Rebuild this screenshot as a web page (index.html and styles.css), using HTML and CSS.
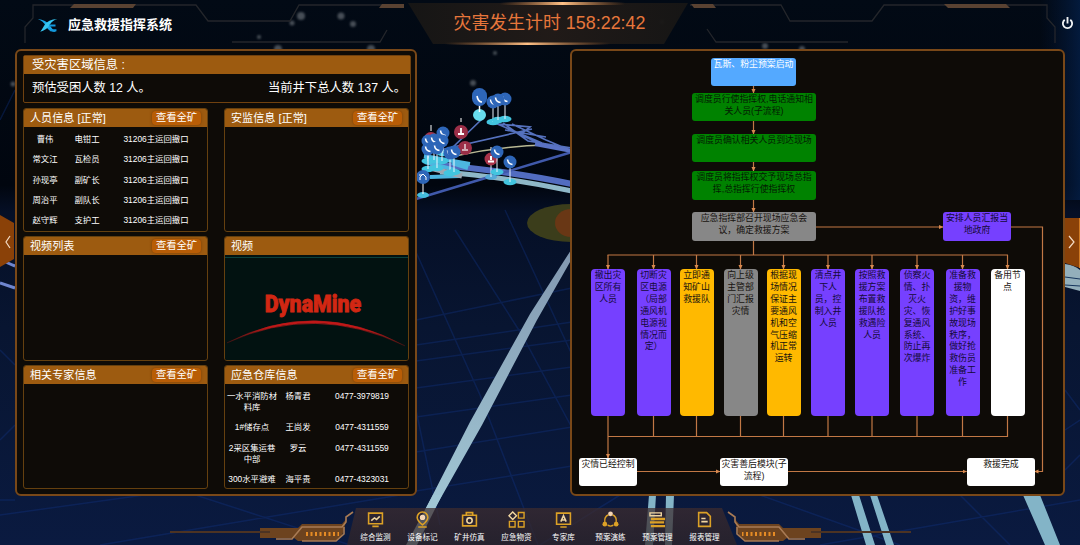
FILE: index.html
```html
<!DOCTYPE html>
<html lang="zh-CN">
<head>
<meta charset="utf-8">
<title>应急救援指挥系统</title>
<link rel="stylesheet" href="styles.css">
</head>
<body>
<svg class="scene" viewBox="0 0 1080 545" aria-hidden="true">
  <defs>
    <linearGradient id="sky" x1="0" y1="0" x2="0" y2="1"><stop offset="0" stop-color="#020a15"/><stop offset=".34" stop-color="#01060f"/><stop offset=".39" stop-color="#050f26"/><stop offset=".6" stop-color="#081531"/><stop offset="1" stop-color="#0a1a40"/></linearGradient>
    <linearGradient id="edge"><stop offset="0" stop-color="#04173a" stop-opacity="0"/><stop offset="1" stop-color="#04204a" stop-opacity=".75"/></linearGradient>
    <linearGradient id="plate"><stop offset="0" stop-color="#171615"/><stop offset=".5" stop-color="#221b18"/><stop offset="1" stop-color="#171615"/></linearGradient>
    <linearGradient id="glow"><stop offset="0" stop-color="#d9803a" stop-opacity="0"/><stop offset=".5" stop-color="#ffc187"/><stop offset="1" stop-color="#d9803a" stop-opacity="0"/></linearGradient>
    <linearGradient id="beam" x1="0" y1="0" x2="0" y2="1"><stop offset="0" stop-color="#8298b0"/><stop offset="1" stop-color="#a1c7d5"/></linearGradient>
    <filter id="soft"><feGaussianBlur stdDeviation="1.3"/></filter>
    <g id="phone"><ellipse cy="20" rx="6.500" ry="3.200" fill="#43c5df"/><path d="M0 6V20" stroke="#e8f4ff"/><circle r="6.500" fill="#2e66b8"/><path d="M-2.500-2.500Q-2 2 2.500 2.500" fill="none" stroke="#fff" stroke-width="1.600"/></g>
    <g id="alarm"><ellipse cy="18" rx="6" ry="2.800" fill="#55a9d8"/><path d="M0 6V18" stroke="#e8f4ff"/><circle r="6.500" fill="#a8344a"/><path d="M0-3V1M-3 2.500H3" stroke="#fff" stroke-width="2"/><path d="M0-12V-8" stroke="#fff"/></g>
  </defs>
  <rect width="1080" height="545" fill="url(#sky)"/>
  <rect x="1040" width="40" height="200" fill="url(#edge)"/>
  <g fill="#8b9298" opacity=".5" filter="url(#soft)"><circle cx="301" cy="16" r="4"/><circle cx="341" cy="16" r="3.500"/><circle cx="353" cy="24" r="3"/><circle cx="292" cy="23" r="2.500"/><circle cx="473" cy="83" r="3"/><circle cx="515" cy="14" r="3.500"/><circle cx="495" cy="53" r="2"/><circle cx="278" cy="49" r="4"/><circle cx="371" cy="49" r="4"/><circle cx="765" cy="46" r="3"/><circle cx="802" cy="49" r="3"/><circle cx="259" cy="37" r="2"/><circle cx="13" cy="84" r="2.500"/><circle cx="662" cy="22" r="2"/></g>
  <g fill="none" stroke="#143990" stroke-width="1.500" opacity=".32">
    <path d="M416 252L480 395 538 545M455 230L522 335 600 480M505 210L630 480M416 410L440 525M416 320L572 288M416 345L572 322M416 361L572 340M416 388L572 367M416 417L572 395M416 452L572 427M416 491L572 466M0 500H15M0 350L15 365M0 440L15 425M0 120L15 90M0 515L180 490 350 545M100 545L400 495M760 495L900 545M820 545L1080 500M1065 390L1080 410M1065 430L1080 420M1065 470L1080 455M540 545L620 495M960 495L1010 545"/>
  </g>
  <path d="M0 258Q8 264 15 266M0 283L15 288" stroke="#6f86cf" stroke-width="3" fill="none"/>
  <g fill="none">
    <path d="M440 172Q500 176 572 191" stroke="#8fb8c8" stroke-width="5"/>
    <path d="M430 164Q510 171 572 184" stroke="#526cc0" stroke-width="6"/>
    <path d="M416 199L572 152" stroke="#4059ab" stroke-width="2.500"/>
    <path d="M452 148L482 119M440 150L532 129 M495 123L542 143 572 151M503 123L528 141 572 148M487 123L530 127 520 135M512 124L546 140 572 151M500 125L545 146M505 130L546 137" stroke="#5571bd" stroke-width="1.700"/>
    <path d="M455 156Q500 146 546 145" stroke="#b9b994" stroke-width="1.500"/>
    <path d="M535 144L572 151" stroke="#5a73c5" stroke-width="4"/>
    <path d="M424 156L470 164M425 162L455 170M430 177L460 176M452 163L468 168" stroke="#4db6e0" stroke-width="4"/>
    <path d="M430 168L462 176" stroke="#9da8b3" stroke-width="5"/>
  </g>
  <ellipse cx="571" cy="223" rx="44" ry="19" fill="#3b3d1b"/><ellipse cx="571" cy="223" rx="16" ry="14" fill="#693715"/>
  <path d="M571 250L574 255 537 320 482 425 434 510H425L470 422 530 314Z" fill="url(#beam)"/>
  <path d="M433 495H442L417 545H406Z" fill="#a1c7d5"/>
  <path d="M649 495H656L653 545H645ZM666 495H674L672 545H665ZM851 495H859L875 545H866ZM870 495H877L894 545H886ZM1023 495H1040L1060 545H1045Z" fill="#83b4c7"/>
  <path d="M1065 264Q1074 265 1080 270V291L1065 287Z" fill="#93afbb"/><path d="M1065 277L1080 279M1065 285L1080 286" stroke="#15345b"/>
  <g>
    <use href="#phone" x="493" y="102"/><use href="#phone" x="505" y="99"/><use href="#phone" x="498" y="100"/>
    <ellipse cx="479.500" cy="115" rx="6.500" ry="6" fill="#67dcec"/><path d="M479.500 100V112" stroke="#fff" stroke-width="1.500"/><rect x="472" y="88" width="15" height="18" rx="7.500" fill="#2e66b8"/><path d="M477 96Q478 102 482 102" stroke="#fff" stroke-width="1.600" fill="none"/>
    <circle cx="431" cy="139" r="7" fill="#a8344a"/><path d="M431 125V131" stroke="#fff"/>
    <use href="#phone" x="443" y="133"/><use href="#phone" x="428" y="141"/><use href="#phone" x="434" y="140"/><use href="#phone" x="442" y="141"/><use href="#phone" x="428" y="149"/><use href="#phone" x="437" y="148"/><use href="#phone" x="450" y="153"/>
    <circle cx="461" cy="132" r="7" fill="#9b2f48"/><path d="M461 128V133M458 134H464" stroke="#fff" stroke-width="1.800"/><path d="M461 118V122" stroke="#fff"/>
    <circle cx="465" cy="148" r="7" fill="#9b2f48"/><path d="M465 144V149M462 150H468" stroke="#e5d3d8" stroke-width="1.500"/>
    <use href="#phone" x="454" y="152"/><use href="#alarm" x="491" y="159"/><use href="#phone" x="497" y="152"/><use href="#phone" x="510" y="162"/>
    <ellipse cx="423" cy="195" rx="6" ry="3" fill="#45bdde"/><path d="M423 182V194" stroke="#fff"/><circle cx="423" cy="177" r="7" fill="#2e66b8"/><path d="M420 180V177L423 174 426 177V180M419 175H422" stroke="#fff" fill="none"/>
  </g>
  <g fill="none" stroke="#24262b" stroke-width="1.300">
    <path d="M25 43V27L33 18V5H196L208 21H290L299 5H400M232 42H380L387 30M1055 43V27L1047 18V5H884L872 21H790L781 5H690M848 42H716L707 29"/>
  </g>
  <path d="M74 4H136L133 8H70ZM382 4H404V8H379ZM691 4H713L716 8H694ZM944 4H1006L1010 8H948Z" fill="#594232"/>
  <path d="M408 3H688L664 44H433Z" fill="url(#plate)" opacity=".95"/>
  <rect x="500" y="2" width="125" height="3" fill="url(#glow)"/><rect x="445" y="42.500" width="165" height="2.500" fill="url(#glow)"/>
  <path d="M0 215L14 223V259L0 267ZM1080 218L1065 218V263L1080 268Z" fill="#8a4108"/>
  <path d="M1079.500 218V268" stroke="#d07b25"/>
  <path d="M10 236L6 242 10 248M1069 236L1074 242 1069 248" fill="none" stroke="#f4dcc6" stroke-width="1.200"/>
  <g id="rail">
    <path d="M260 528H298L302 524H342L347 518 342 536 335 541H298L294 538H260Z" fill="#6d431f"/>
    <path d="M170 532H270" stroke="#4c3323" stroke-width="2"/>
    <path d="M276 539H292L302 527H342L346 522V517L353 512M302 541H336L344 534V527" fill="none" stroke="#a87b55" stroke-width="1.600"/>
    <path d="M306 534H339" stroke="#e58b25" stroke-width="4" stroke-dasharray="2 2.500"/>
  </g>
  <use href="#rail" transform="translate(1081 0) scale(-1 1)"/>
</svg>

<header class="topbar">
  <div class="brand">
    <svg class="logo" viewBox="0 0 22 16"><path d="M0 1Q9 2 13 8T20 15Q12 15 9 9T0 1Z" fill="#19a7e8"/><path d="M21 1Q11 1 7 8T2 15Q10 13 13 7 16 2 21 1Z" fill="#36c5f0"/><path d="M12 8H19M13 13H20" stroke="#1398dd" stroke-width="2"/></svg>
    <h1>应急救援指挥系统</h1>
  </div>
  <div class="timer">灾害发生计时 158:22:42</div>
  <svg class="power" viewBox="0 0 14 14" fill="none" stroke="#f0f2f4" stroke-width="2"><path d="M4 3A5 5 0 1 0 10 3M7 0V7"/></svg>
</header>

<main class="board">
  <section class="panel info">
    <div class="summary">
      <h2>受灾害区域信息 :</h2>
      <div class="counts"><span>预估受困人数 12 人。</span><span>当前井下总人数 137 人。</span></div>
    </div>
    <div class="cards">
      <article class="card">
        <h3>人员信息 [正常]<button>查看全矿</button></h3>
        <div class="people">
          <span>曹伟</span><span>电钳工</span><span>31206主运回撤口</span>
          <span>常文江</span><span>瓦检员</span><span>31206主运回撤口</span>
          <span>孙现亭</span><span>副矿长</span><span>31206主运回撤口</span>
          <span>周治平</span><span>副队长</span><span>31206主运回撤口</span>
          <span>赵守辉</span><span>支护工</span><span>31206主运回撤口</span>
        </div>
      </article>
      <article class="card"><h3>安监信息 [正常]<button>查看全矿</button></h3></article>
      <article class="card"><h3>视频列表<button>查看全矿</button></h3></article>
      <article class="card">
        <h3>视频</h3>
        <svg class="video" viewBox="0 0 182 104" preserveAspectRatio="none">
          <defs><linearGradient id="arc"><stop offset="0" stop-color="#c01818" stop-opacity=".25"/><stop offset=".25" stop-color="#c01818"/><stop offset=".75" stop-color="#c01818"/><stop offset="1" stop-color="#c01818" stop-opacity=".25"/></linearGradient></defs>
          <rect width="182" height="104" fill="#021211"/><path d="M0 2.500H182" stroke="#0c403b"/>
          <text class="wordmark" x="39.500" y="56" textLength="96" lengthAdjust="spacingAndGlyphs">DynaMine</text>
          <path d="M2 87Q90 42 179 90Q90 47 2 87Z" fill="url(#arc)" stroke="url(#arc)" stroke-width=".6"/>
        </svg>
      </article>
      <article class="card"><h3>相关专家信息<button>查看全矿</button></h3></article>
      <article class="card">
        <h3>应急仓库信息<button>查看全矿</button></h3>
        <div class="stores">
          <span>一水平消防材<br>料库</span><span>杨青君</span><span>0477-3979819</span>
          <span>1#储存点</span><span>王尚发</span><span>0477-4311559</span>
          <span>2采区集运巷<br>中部</span><span>罗云</span><span>0477-4311559</span>
          <span>300水平避难</span><span>海平贵</span><span>0477-4323031</span>
        </div>
      </article>
    </div>
  </section>

  <section class="panel flow">
    <svg class="wires" viewBox="572 51 491 442" fill="none" stroke="#c17845" stroke-width="1.200">
      <defs><marker id="tip" markerWidth="6" markerHeight="6" refX="4" refY="2.500" orient="auto" markerUnits="userSpaceOnUse"><path d="M0 0.500L4.500 2.500 0 4.500Z" fill="#d98a50" stroke="none"/></marker></defs>
      <g marker-end="url(#tip)">
        <path d="M753.500 86V93"/><path d="M753.500 121V134"/><path d="M753.500 162V171"/><path d="M753.500 200V212"/><path d="M816 227H943"/>
        <path d="M608 255V269"/><path d="M653.500 255V269"/><path d="M696.500 255V269"/><path d="M740.500 255V269"/><path d="M783.500 255V269"/><path d="M828 255V269"/><path d="M872 255V269"/><path d="M917 255V269"/><path d="M962.500 255V269"/><path d="M1007.500 255V269"/>
        <path d="M608 416V458"/><path d="M637 471.500H720"/><path d="M788 471.500H966.500"/><path d="M1011 227H1042.500V471.500H1034.500"/>
      </g>
      <path d="M753.500 241V255M607.500 255H1008M653.500 416V436.500M696.500 416V436.500M740.500 416V436.500M783.500 416V436.500M828 416V436.500M872 416V436.500M917 416V436.500M962.500 416V436.500M1007.500 416V436.500H608"/>
    </svg>
    <div class="node start">瓦斯、粉尘预案启动</div>
    <div class="node wide green s1">调度员行使指挥权,电话通知相<br>关人员(子流程)</div>
    <div class="node wide green s2">调度员确认相关人员到达现场</div>
    <div class="node wide green s3">调度员将指挥权交予现场总指<br>挥,总指挥行使指挥权</div>
    <div class="node wide gray s4">应急指挥部召开现场应急会<br>议，确定救援方案</div>
    <div class="node mid violet report">安排人员汇报当<br>地政府</div>
    <div class="node tall violet t1">撤出灾<br>区所有<br>人员</div>
    <div class="node tall violet t2">切断灾<br>区电源<br>（局部<br>通风机<br>电源视<br>情况而<br>定）</div>
    <div class="node tall amber t3">立即通<br>知矿山<br>救援队</div>
    <div class="node tall gray t4">向上级<br>主管部<br>门汇报<br>灾情</div>
    <div class="node tall amber t5">根据现<br>场情况<br>保证主<br>要通风<br>机和空<br>气压缩<br>机正常<br>运转</div>
    <div class="node tall violet t6">清点井<br>下人<br>员，控<br>制入井<br>人员</div>
    <div class="node tall violet t7">按照救<br>援方案<br>布置救<br>援队抢<br>救遇险<br>人员</div>
    <div class="node tall violet t8">侦察火<br>情、扑<br>灭火<br>灾、恢<br>复通风<br>系统、<br>防止再<br>次爆炸</div>
    <div class="node tall violet t9">准备救<br>援物<br>资，维<br>护好事<br>故现场<br>秩序，<br>做好抢<br>救伤员<br>准备工<br>作</div>
    <div class="node tall white t10">备用节<br>点</div>
    <div class="node white e1">灾情已经控制</div>
    <div class="node mid white e2">灾害善后模块(子<br>流程)</div>
    <div class="node mid white e3">救援完成</div>
  </section>
</main>

<footer class="dock">
  <nav>
    <a><svg viewBox="0 0 16 16"><path d="M1.500 2H14.500V12H1.500ZM5 14.500H11"/><path class="lite" d="M4 9L7 6.500 9 8 12 5"/></svg>综合监测</a>
    <a><svg viewBox="0 0 16 16"><path d="M8 13Q3 9 3 6A5 5 0 0 1 13 6Q13 9 8 13ZM4 15H12"/><circle class="pale" cx="8" cy="6" r="2.500"/></svg>设备标记</a>
    <a><svg viewBox="0 0 16 16"><path d="M1.500 4H14.500V14H1.500ZM5 4V1.500H11V4"/><circle class="lite" cx="8" cy="9" r="2.500"/></svg>矿井仿真</a>
    <a><svg viewBox="0 0 18 18"><path class="lite" d="M5 1L9 5 5 9 1 5Z"/><path d="M11 1.500H17V7.500H11ZM1.500 11H7.500V17H1.500ZM11 11H17V17H11Z"/></svg>应急物资</a>
    <a><svg viewBox="0 0 16 16"><path d="M1.500 2H14.500V12.500H1.500ZM5 15H11"/><path class="lite" d="M5.500 10L8 4.500 10.500 10M6.500 8.500H9.500"/></svg>专家库</a>
    <a><svg viewBox="0 0 18 18"><path d="M7 4Q2 6 3 12M11 4Q16 6 15 12M6 15Q9 17 12 15"/><circle class="pale" cx="9" cy="3" r="2.500"/><circle class="fill" cx="3" cy="14" r="2.500"/><circle class="fill" cx="15" cy="14" r="2.500"/></svg>预案演练</a>
    <a><svg viewBox="0 0 18 18"><path class="lite" d="M1 2H13V5H1Z"/><path class="thick" d="M2 8.500H17M1 12H16M2 16H17"/></svg>预案管理</a>
    <a><svg viewBox="0 0 16 16"><path d="M2.500 1.500H10L13.500 5V14.500H2.500Z"/><path class="lite" d="M5 7H9M5 10H11"/></svg>报表管理</a>
  </nav>
</footer>
</body>
</html>
```
FILE: styles.css
```css
* { box-sizing: border-box; }
body {
  margin: 0;
  width: 1080px;
  height: 545px;
  overflow: hidden;
  display: flex;
  flex-direction: column;
  position: relative;
  background: #020a15;
  color: #fff;
  font-family: "Liberation Sans", "Noto Sans CJK SC", sans-serif;
}
h1, h2, h3 { margin: 0; font-weight: 400; }
.scene { position: absolute; inset: 0; width: 1080px; height: 545px; z-index: -1; }

.topbar {
  height: 49px;
  flex: none;
  display: grid;
  grid-template-columns: 1fr 280px 1fr;
  padding: 0 6px 2px 37px;
  align-items: center;
}
.brand { display: flex; align-items: center; gap: 9px; padding-top: 3px; }
.logo { width: 22px; height: 15px; }
.brand h1 { font-size: 13px; line-height: 20px; font-weight: 700; white-space: nowrap; }
.timer { color: #e7763b; font-size: 17.9px; line-height: 24px; white-space: nowrap; text-align: center; margin: -2px 0 0 -12px; }
.power { width: 13px; height: 13px; justify-self: end; }

.board { display: flex; justify-content: space-between; height: 447px; padding: 0 15px; }
.panel { border: 2px solid #794818; border-radius: 6px; background: #0e0b07; height: 447px; }
.info { width: 402px; padding: 4px 4px 4px 6px; display: flex; flex-direction: column; gap: 5px; }
.summary { height: 48px; border: 1px solid #70410f; border-radius: 2px; }
.summary h2 { height: 18px; padding-left: 8px; background: #9d5b10; font-size: 12.3px; line-height: 19px; }
.counts { display: flex; justify-content: space-between; padding: 0 4px 0 8px; font-size: 12.3px; line-height: 28px; }
.cards {
  display: grid;
  grid-template-columns: 185px 185px;
  grid-template-rows: 124px 125px 124px;
  column-gap: 16px;
  row-gap: 4px;
}
.card { border: 1px solid #65400f; border-radius: 3px; overflow: hidden; display: flex; flex-direction: column; }
.card h3 {
  display: flex;
  justify-content: space-between;
  align-items: center;
  flex: 0 0 18px;
  padding: 0 6px;
  background: #9d5b10;
  font-size: 11.1px;
  line-height: 18px;
}
.card button {
  width: 49px;
  height: 14px;
  padding: 0;
  border: 0;
  border-radius: 4px;
  background: #b85d06;
  box-shadow: 0 0 3px #7b3c05;
  color: #fff;
  font: 10.3px/14px "Liberation Sans", "Noto Sans CJK SC", sans-serif;
}
.people, .stores { display: grid; font-size: 8.4px; text-align: center; white-space: nowrap; }
.people { grid-template-columns: 42px 42px 96px; grid-auto-rows: 20.3px; line-height: 20.3px; padding-top: 2px; }
.stores { grid-template-columns: 54px 38px 90px; grid-template-rows: 31px 20.500px 31.500px 20px; line-height: 11px; padding-top: 7px; }
.video { width: 100%; flex: 1; min-height: 0; display: block; }
.wordmark { font: 900 23px Roboto, "Liberation Sans", sans-serif; fill: #d22713; stroke: #d22713; stroke-width: .8; }

.flow { width: 495px; position: relative; }
.wires { position: absolute; left: 0; top: 0; width: 491px; height: 442px; }
.node {
  position: absolute;
  width: 58px;
  height: 28px;
  padding-top: 1px;
  border-radius: 3px;
  color: #17130f;
  font-size: 8.9px;
  line-height: 11.9px;
  text-align: center;
  white-space: nowrap;
}
.wide { left: 120px; width: 124px; }
.mid { width: 68px; }
.tall { top: 218px; width: 34px; height: 147px; border-radius: 4px; }
.green { background: #008200; color: #031c03; }
.gray { background: #878787; }
.violet { background: #7640ff; color: #140a38; }
.amber { background: #ffb900; }
.white { background: #fff; }
.start { left: 139px; top: 7px; width: 85px; background: #54a9ff; color: #fff; }
.s1 { top: 42px; }
.s2 { top: 83px; }
.s3 { top: 120px; height: 29px; }
.s4 { top: 161px; height: 29px; }
.report { left: 371px; top: 161px; height: 29px; }
.t1 { left: 19px; }
.t2 { left: 64.500px; }
.t3 { left: 107.500px; }
.t4 { left: 151.500px; }
.t5 { left: 194.500px; }
.t6 { left: 239px; }
.t7 { left: 283px; }
.t8 { left: 328px; }
.t9 { left: 373.500px; }
.t10 { left: 418.500px; }
.e1 { left: 7px; top: 407px; }
.e2 { left: 148px; top: 407px; }
.e3 { left: 395px; top: 407px; }

.dock { flex: 1; display: flex; justify-content: center; align-items: flex-end; }
.dock nav {
  width: 390px;
  height: 37px;
  margin-left: 4px;
  padding: 0 8px 0 5px;
  display: grid;
  grid-template-columns: repeat(8, 47px);
  background: linear-gradient(rgba(62, 44, 46, .72), rgba(48, 36, 38, .72));
  clip-path: polygon(9px 0, 375px 0, 100% 100%, 0 100%);
}
.dock a { display: flex; flex-direction: column; align-items: center; padding-top: 3px; gap: 4px; font-size: 7.6px; line-height: 12px; white-space: nowrap; }
.dock svg { width: 17px; height: 17px; fill: none; stroke: #dca126; stroke-width: 1.5; }
.dock .lite { stroke: #f0d5a0; }
.dock .pale { fill: #f5d6b5; stroke: none; }
.dock .fill { fill: #dca126; stroke: none; }
.dock .thick { stroke-width: 2.5; }
```
